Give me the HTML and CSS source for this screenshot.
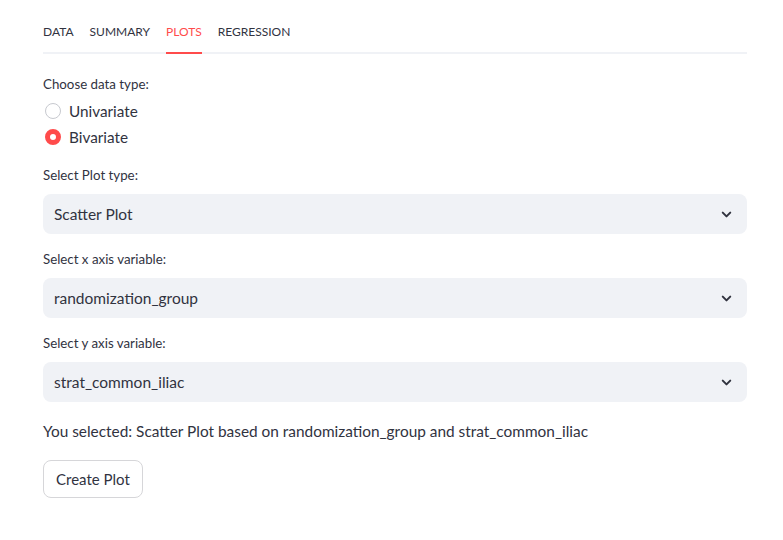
FILE: index.html
```html
<!DOCTYPE html>
<html>
<head>
<meta charset="utf-8">
<link rel="stylesheet" href="styles.css">
</head>
<body>
<main class="page">
  <nav class="tabs">
    <span class="tab">DATA</span>
    <span class="tab">SUMMARY</span>
    <span class="tab active">PLOTS</span>
    <span class="tab">REGRESSION</span>
  </nav>

  <section class="field radio-field">
    <div class="label">Choose data type:</div>
    <div class="radios">
      <label class="radio"><span class="dot"></span>Univariate</label>
      <label class="radio checked"><span class="dot"></span>Bivariate</label>
    </div>
  </section>

  <section class="field">
    <div class="label">Select Plot type:</div>
    <div class="select"><span>Scatter Plot</span>
      <svg class="chev" width="15" height="15" viewBox="0 0 24 24"><path d="M6 9l6 6 6-6" fill="none" stroke="#31333f" stroke-width="3.2" stroke-linecap="round" stroke-linejoin="round"/></svg>
    </div>
  </section>

  <section class="field">
    <div class="label">Select x axis variable:</div>
    <div class="select"><span>randomization_group</span>
      <svg class="chev" width="15" height="15" viewBox="0 0 24 24"><path d="M6 9l6 6 6-6" fill="none" stroke="#31333f" stroke-width="3.2" stroke-linecap="round" stroke-linejoin="round"/></svg>
    </div>
  </section>

  <section class="field">
    <div class="label">Select y axis variable:</div>
    <div class="select"><span>strat_common_iliac</span>
      <svg class="chev" width="15" height="15" viewBox="0 0 24 24"><path d="M6 9l6 6 6-6" fill="none" stroke="#31333f" stroke-width="3.2" stroke-linecap="round" stroke-linejoin="round"/></svg>
    </div>
  </section>

  <p class="msg">You selected: Scatter Plot based on randomization_group and strat_common_iliac</p>

  <button class="btn">Create Plot</button>
</main>
</body>
</html>
```

FILE: styles.css
```css
* { box-sizing: border-box; }
html, body { margin: 0; padding: 0; background: #fff; }
body {
  font-family: "Lato", "Open Sans", sans-serif;
  color: #31333f;
  width: 783px;
  height: 540px;
  overflow: hidden;
}
.page {
  padding: 22px 36px 0 43px;
  display: flex;
  flex-direction: column;
}
.tabs {
  display: flex;
  gap: 16px;
  border-bottom: 2px solid #f0f2f6;
  height: 32px;
}
.tab {
  font-size: 12px;
  line-height: 20px;
  padding-bottom: 10px;
  color: #31333f;
}
.tab.active {
  color: #ff4b4b;
  border-bottom: 2px solid #ff4b4b;
  margin-bottom: -2px;
}
.field { display: flex; flex-direction: column; }
.radio-field { margin-top: 20px; }
.label {
  font-size: 13.3px;
  line-height: 20px;
  margin-bottom: 9px;
}
.radio-field .label { margin-bottom: 7px; }
.radios { display: flex; flex-direction: column; gap: 6px; }
.radio {
  display: flex;
  align-items: center;
  font-size: 15.3px;
  line-height: 20px;
  gap: 8px;
}
.dot {
  width: 16px;
  height: 16px;
  border-radius: 50%;
  border: 1px solid #c7c9cf;
  background: #fff;
  margin-left: 2px;
}
.radio.checked .dot {
  border: 5px solid #ff4b4b;
  background: #fff;
}
.field + .field { margin-top: 15px; }
.radio-field + .field { margin-top: 18px; }
.select {
  height: 40px;
  background: #f0f2f6;
  border-radius: 8px;
  display: flex;
  align-items: center;
  justify-content: space-between;
  padding: 0 13px 0 11px;
  font-size: 15.5px;
}
.msg {
  margin: 17px 0 0 0;
  font-size: 15.4px;
  line-height: 24px;
}
.btn {
  align-self: flex-start;
  margin-top: 17px;
  height: 38px;
  padding: 0 12px;
  border: 1px solid #d6d6d9;
  border-radius: 8px;
  background: #fff;
  font-family: inherit;
  font-size: 15px;
  color: #31333f;
}
```
